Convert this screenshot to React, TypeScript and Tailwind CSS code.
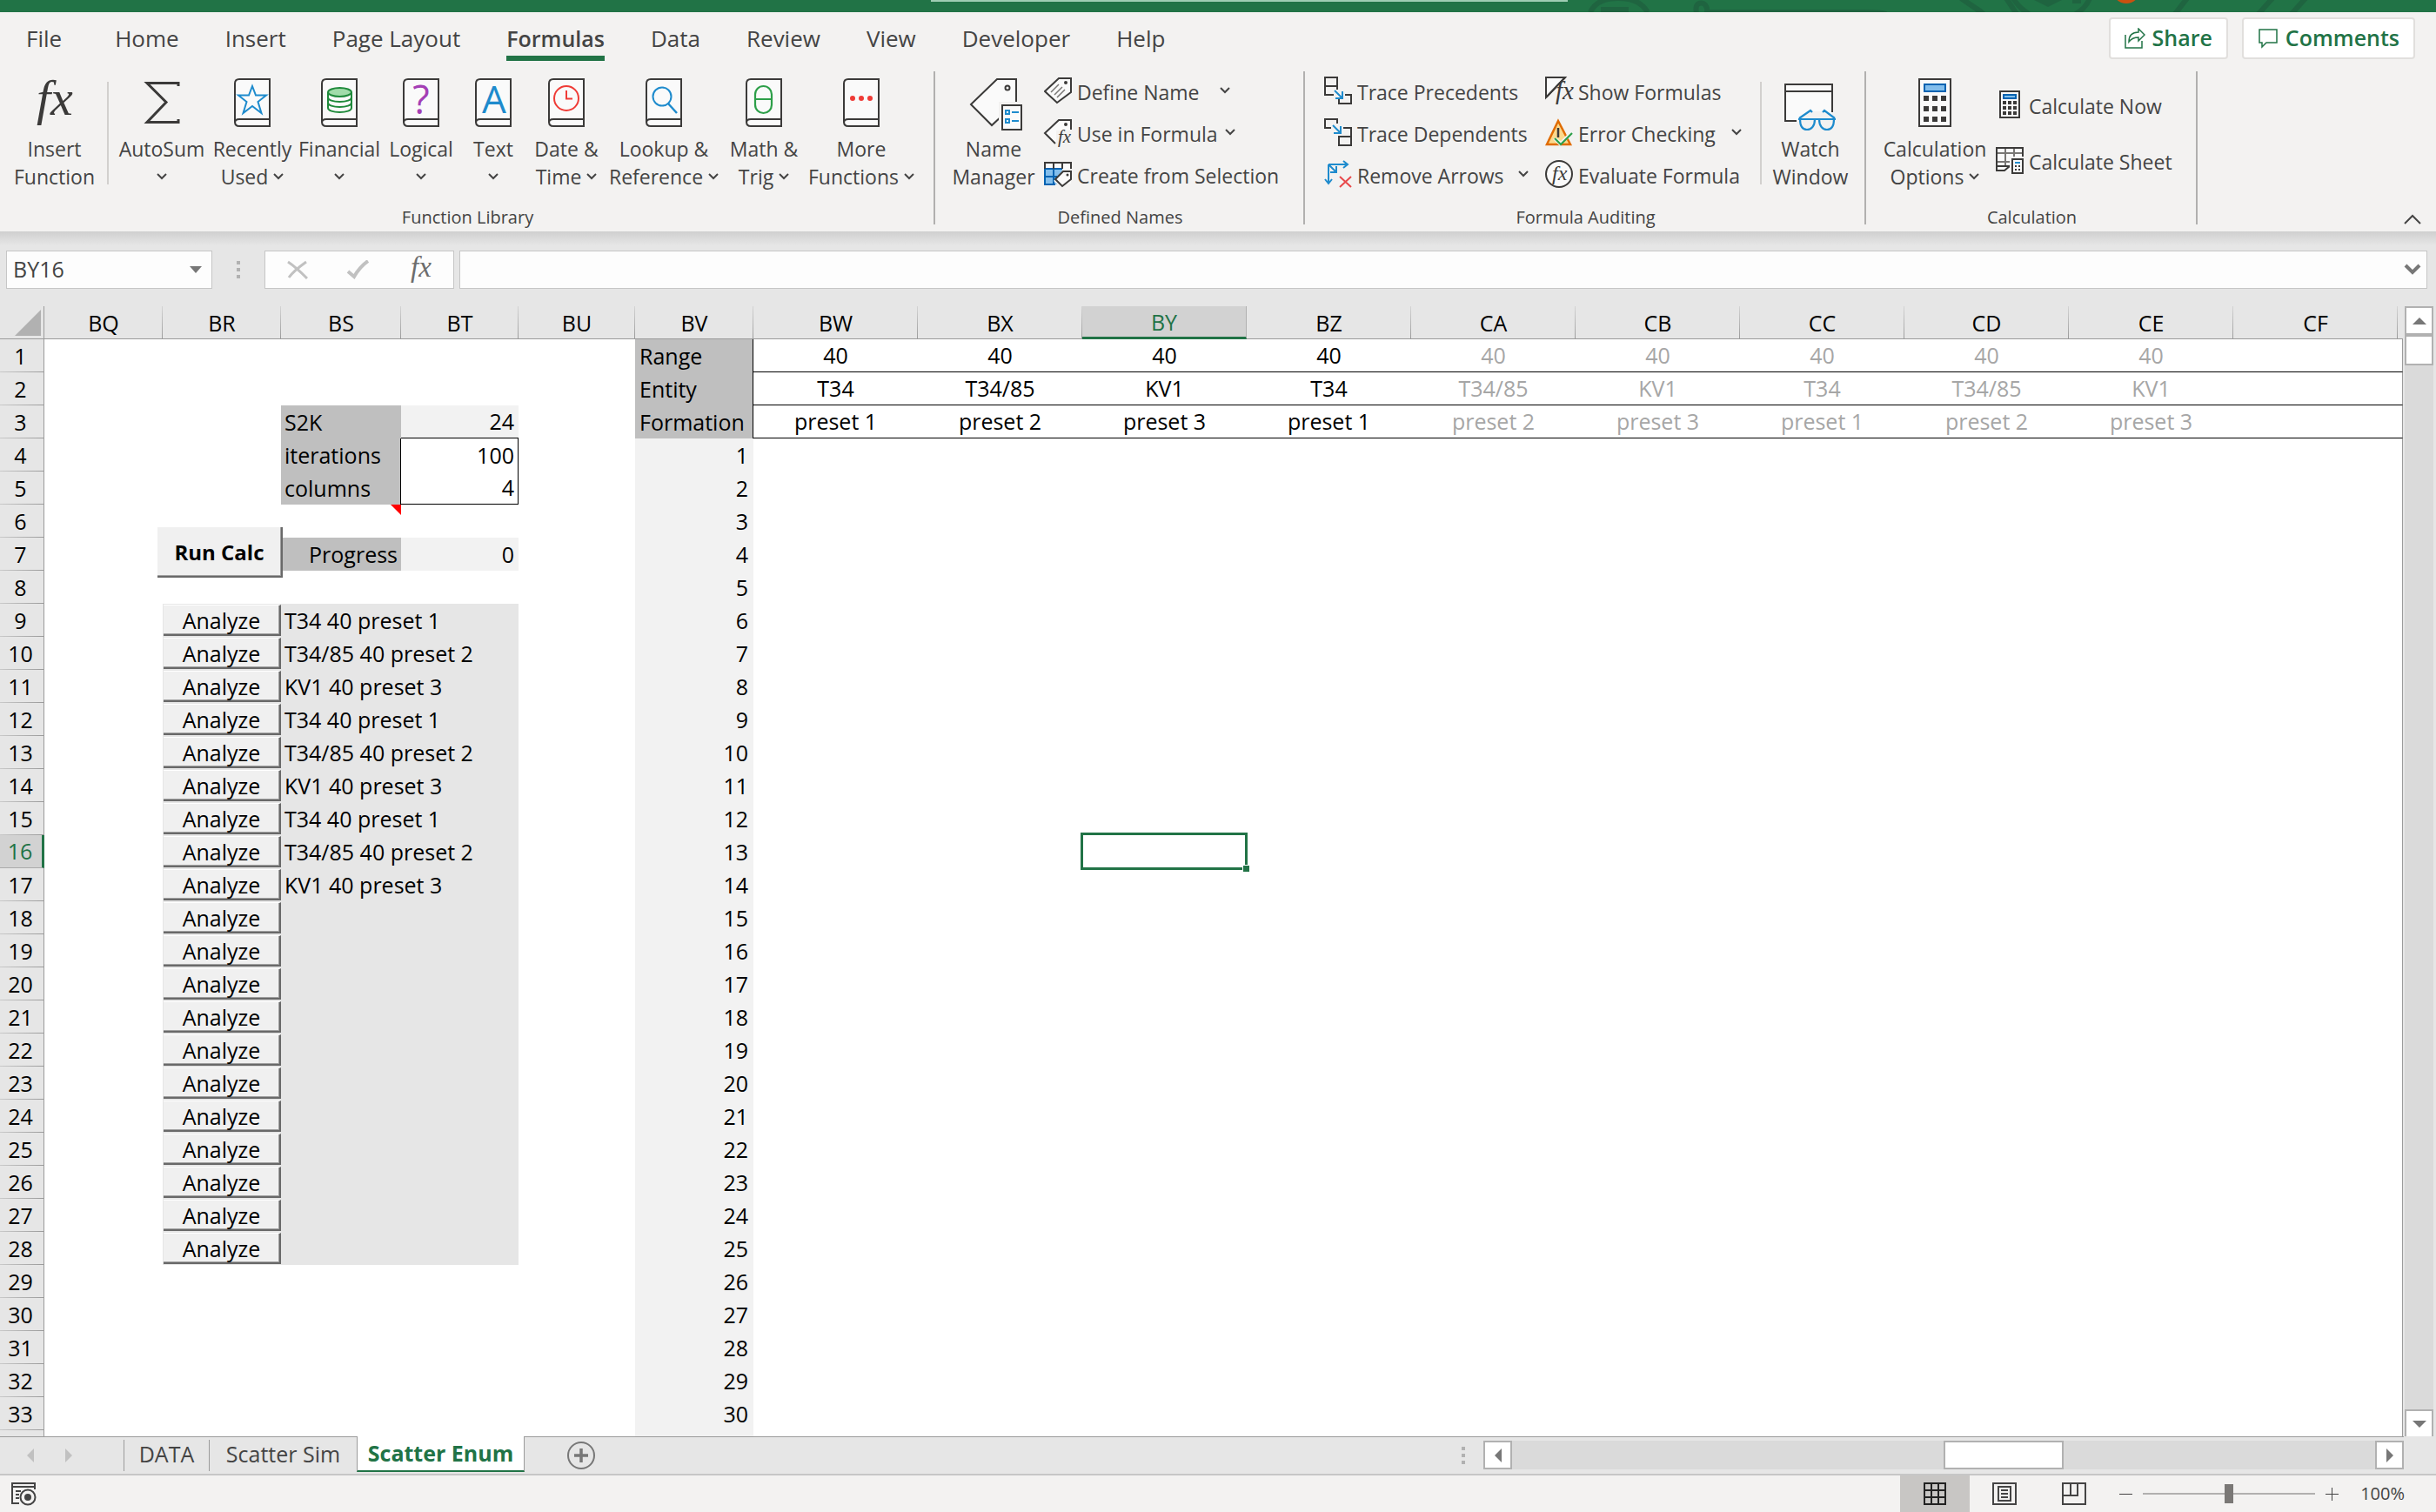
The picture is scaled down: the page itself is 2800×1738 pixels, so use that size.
import React from "react";

const INK = "#3b3a39";
const BLUE = "#1e8bcd";

/* ---------- small shared pieces ---------- */

function Chevron({ className = "" }: { className?: string }) {
  return (
    <svg width="12" height="8" viewBox="0 0 12 8" fill="none" className={`inline-block shrink-0 ${className}`}>
      <path d="M1 1l5 5 5-5" stroke="#444" strokeWidth="2" />
    </svg>
  );
}

function Book({ children }: { children: React.ReactNode }) {
  return (
    <svg width="42" height="56" viewBox="0 0 42 56" fill="none" className="overflow-visible">
      <path d="M41 1H6C3 1 1 3 1 6v44c0 3 2 5 5 5h35z" fill="#fafafa" stroke={INK} strokeWidth="2" />
      <path d="M41 47H6c-3 0-5 1.5-5 4" stroke={INK} strokeWidth="2" />
      {children}
    </svg>
  );
}

function FxText({ x, y, size, color = INK }: { x: number; y: number; size: number; color?: string }) {
  return (
    <text x={x} y={y} fontSize={size} fontFamily="Liberation Serif, serif" fontStyle="italic" fill={color}>
      fx
    </text>
  );
}

/* ---------- large ribbon icons ---------- */

const FxIcon = () => (
  <svg width="50" height="60" viewBox="0 0 50 60" className="overflow-visible">
    <FxText x={4} y={42} size={58} />
  </svg>
);

const SigmaIcon = () => (
  <svg width="42" height="56" viewBox="0 0 42 56" fill="none">
    <path d="M40 9V5.5H4L26 27.500 4 50.500H40V47" stroke={INK} strokeWidth="3" />
  </svg>
);

const StarIcon = () => (
  <Book>
    <path d="M21 9l4 10.500h12L27.500 27l4 13L21 32l-10.500 8 4-13L5 19.500h12z" stroke={BLUE} strokeWidth="2" />
  </Book>
);

const CoinsIcon = () => (
  <Book>
    <path d="M8 16v18c0 3 6 5 13.500 5S35 37 35 34V16" stroke="#1f8a3b" strokeWidth="2" />
    <path d="M8 22c0 3 6 5 13.500 5S35 25 35 22M8 28c0 3 6 5 13.500 5S35 31 35 28" stroke="#1f8a3b" strokeWidth="2" />
    <ellipse cx="21.500" cy="16" rx="13.500" ry="5" fill="#a1dcaa" stroke="#1f8a3b" strokeWidth="2" />
  </Book>
);

const QuestionIcon = () => (
  <Book>
    <text x="21" y="41" textAnchor="middle" fontSize="45" fontFamily="Open Sans, sans-serif" fill="#a43fb5">
      ?
    </text>
  </Book>
);

const LetterIcon = () => (
  <Book>
    <text x="22" y="40" textAnchor="middle" fontSize="44" fontFamily="Open Sans, sans-serif" fill={BLUE}>
      A
    </text>
  </Book>
);

const ClockIcon = () => (
  <Book>
    <circle cx="21" cy="23" r="14" stroke="#ef3b36" strokeWidth="2" />
    <path d="M21 14v9.500h7" stroke="#ef3b36" strokeWidth="2" />
  </Book>
);

const LookupIcon = () => (
  <Book>
    <circle cx="19" cy="21" r="10.500" stroke={BLUE} strokeWidth="2" />
    <path d="M26 29l10 11" stroke={BLUE} strokeWidth="2.500" />
  </Book>
);

const ThetaIcon = () => (
  <Book>
    <rect x="11" y="9" width="19" height="31" rx="9.500" stroke="#2d9f49" strokeWidth="2.200" />
    <path d="M11 24h19" stroke="#2d9f49" strokeWidth="2" />
  </Book>
);

const DotsIcon = () => (
  <Book>
    <circle cx="11" cy="23" r="3" fill="#ef3b36" />
    <circle cx="21" cy="23" r="3" fill="#ef3b36" />
    <circle cx="31" cy="23" r="3" fill="#ef3b36" />
  </Book>
);

const NameManagerIcon = () => (
  <svg width="66" height="62" viewBox="0 0 66 62" fill="none">
    <path d="M37 1h22v27L31 54 7 30z" fill="#fafafa" stroke={INK} strokeWidth="2" />
    <circle cx="49" cy="11" r="2.500" stroke={INK} strokeWidth="2" />
    <path d="M39 27h27v35H39z" fill="#f3f2f1" />
    <rect x="43" y="31" width="22" height="28" fill="#fafafa" stroke={INK} strokeWidth="2" />
    <path d="M47 37h4v4h-4zM47 47h4v4h-4zM54 39h8M54 49h8" stroke={BLUE} strokeWidth="2" />
  </svg>
);

const WatchIcon = () => (
  <svg width="62" height="62" viewBox="0 0 62 62" fill="none">
    <path d="M2 7h54v41H2z" fill="#fafafa" />
    <path d="M15 49H2V7h54v32M2 15h54" stroke={INK} strokeWidth="2" />
    <path d="M18 47l12-9h18l11 9-4 14H20z" fill="#f3f2f1" />
    <path
      d="M17 47h43M18 46l13-9 2 2M59 46l-12-9-2 2M19 47c0 8 3 12 8 12s9-4 9-12M41 47c0 8 4 12 9 12s8-4 8-12"
      stroke={BLUE}
      strokeWidth="2.200"
    />
  </svg>
);

const CalculatorIcon = () => (
  <svg width="38" height="56" viewBox="0 0 38 56" fill="none">
    <rect x="1" y="1" width="36" height="54" fill="#fafafa" stroke={INK} strokeWidth="2" />
    <rect x="7" y="7" width="24" height="8" fill="#83beec" stroke="#0063b1" strokeWidth="2" />
    {[20, 32, 44].map((y) => (
      <path key={y} d={`M6 ${y}h6v6H6zM16 ${y}h6v6h-6zM26 ${y}h6v6h-6z`} fill={INK} />
    ))}
  </svg>
);

/* ---------- small ribbon icons ---------- */

const tagPath = "M17 2h14v16L15 30 1 17z";

const DefineIcon = () => (
  <svg width="32" height="32" viewBox="0 0 32 32" fill="none">
    <path d={tagPath} fill="#fafafa" stroke={INK} strokeWidth="2" />
    <circle cx="25" cy="7" r="2" fill={INK} />
    <path d="M8 18l9-9M12 21l9-9M15 24l9-9" stroke="#797775" strokeWidth="1.500" />
  </svg>
);

const UseIcon = () => (
  <svg width="32" height="32" viewBox="0 0 32 32" fill="none" className="overflow-visible">
    <path d={tagPath} fill="#fafafa" />
    <path d="M31 13V2H17L1 17l12 12" stroke={INK} strokeWidth="2" />
    <circle cx="25" cy="7" r="2" fill={INK} />
    <path d="M14 14h18v18H14z" fill="#f3f2f1" />
    <FxText x={16} y={28} size={21} />
  </svg>
);

const CreateIcon = () => (
  <svg width="32" height="32" viewBox="0 0 32 32" fill="none">
    <path d="M1 3h30v24H1z" fill="#fafafa" />
    <path d="M1 10h20v18H1z" fill="#83beec" />
    <path d="M1 10h20M1 19h14M11 10v18M1 10v18h12" stroke="#0063b1" strokeWidth="2" />
    <path d="M1 10V3h30v8M11 3v7M21 3v7" stroke={INK} strokeWidth="2" />
    <path d="M23 10h9v12L20 32l-9-8z" fill="#f3f2f1" />
    <path d="M22 13h9v9l-10 8-8-8z" fill="#fafafa" stroke={INK} strokeWidth="2" />
    <circle cx="27" cy="17" r="1.500" fill={INK} />
  </svg>
);

const PrecedentsIcon = () => (
  <svg width="32" height="32" viewBox="0 0 32 32" fill="none">
    <path d="M11 21H1V1h14v14M1 11h14M17 25v6h14V21h-7" stroke={INK} strokeWidth="2" />
    <path d="M12 16l9 9M21 17v8h-8" stroke={BLUE} strokeWidth="2" />
  </svg>
);

const DependentsIcon = () => (
  <svg width="32" height="32" viewBox="0 0 32 32" fill="none">
    <path d="M8 11H1V1h14v5M22 11h9v20H17V21h14" stroke={INK} strokeWidth="2" />
    <path d="M10 8l9 9M19 9v8h-8" stroke={BLUE} strokeWidth="2" />
  </svg>
);

const RemoveIcon = () => (
  <svg width="32" height="32" viewBox="0 0 32 32" fill="none">
    <path d="M5 5h22M22 1l5 4-5 4M5 5v22M1 22l4 5 4-5M5 5l9 9M14 7v7H7" stroke={BLUE} strokeWidth="2" />
    <path d="M18 19l13 12M31 19L18 31" stroke="#e8484a" strokeWidth="2" />
  </svg>
);

const ShowIcon = () => (
  <svg width="32" height="32" viewBox="0 0 32 32" fill="none" className="overflow-visible">
    <path d="M1 24V1h22z" fill="#fafafa" stroke={INK} strokeWidth="2" />
    <path d="M13 12l8-8h11v28H11z" fill="#f3f2f1" />
    <path d="M1 24L23 1" stroke={INK} strokeWidth="2" />
    <FxText x={12} y={26} size={29} />
  </svg>
);

const ErrorIcon = () => (
  <svg width="32" height="32" viewBox="0 0 32 32" fill="none">
    <path d="M15 3l14 27H2z" fill="#fbd98d" stroke="#e06c00" strokeWidth="2.500" />
    <path d="M15 11v11" stroke={INK} strokeWidth="2.500" />
    <path d="M9 24l8 8 15-14v-4l-4 2-10 10-6-4z" fill="#f3f2f1" />
    <path d="M11 23l7 7 13-13" stroke="#2d9f49" strokeWidth="2.200" />
  </svg>
);

const EvaluateIcon = () => (
  <svg width="32" height="32" viewBox="0 0 32 32" fill="none">
    <circle cx="16" cy="16" r="15" fill="#fafafa" stroke={INK} strokeWidth="2" />
    <FxText x={8} y={23} size={24} />
  </svg>
);

const CalcNowIcon = () => (
  <svg width="32" height="32" viewBox="0 0 32 32" fill="none">
    <rect x="5" y="1" width="22" height="30" fill="#fafafa" stroke={INK} strokeWidth="2" />
    <rect x="9" y="5" width="14" height="4" fill="#83beec" stroke="#0063b1" strokeWidth="2" />
    {[12, 18, 24].map((y) => (
      <path key={y} d={`M8 ${y}h4v4H8zM14 ${y}h4v4h-4zM20 ${y}h4v4h-4z`} fill={INK} />
    ))}
  </svg>
);

const CalcSheetIcon = () => (
  <svg width="32" height="32" viewBox="0 0 32 32" fill="none">
    <path d="M1 2h30v26H1z" fill="#fafafa" />
    <path d="M1 8h30M1 18h16M11 2v22M21 2v12" stroke="#797775" strokeWidth="2" />
    <path d="M31 12V2H1v26h9l6-5H1" stroke={INK} strokeWidth="2" />
    <path d="M16 12h16v20H16z" fill="#f3f2f1" />
    <rect x="19" y="15" width="12" height="16" fill="#fafafa" stroke={INK} strokeWidth="2" />
    <path d="M22 19h6" stroke={BLUE} strokeWidth="2" />
    <path d="M22 22h2v2h-2zM26 22h2v2h-2zM22 26h2v2h-2zM26 26h2v2h-2z" fill={INK} />
  </svg>
);

/* ---------- ribbon ---------- */

function BigButton({
  icon,
  first,
  second,
  menu,
  className,
}: {
  icon: React.ReactNode;
  first: string;
  second?: string;
  menu?: boolean;
  className: string;
}) {
  return (
    <button type="button" className={`flex shrink-0 flex-col items-center pt-[14px] ${className}`}>
      <span className="flex h-[65px] items-start justify-center">{icon}</span>
      <span className="whitespace-nowrap leading-8">{first}</span>
      <span className="flex h-8 items-center justify-center gap-[6px] whitespace-nowrap leading-8">
        {second}
        {menu && <Chevron />}
      </span>
    </button>
  );
}

function SmallButton({ icon, label, menu }: { icon: React.ReactNode; label: string; menu?: string }) {
  return (
    <button type="button" className="flex h-12 items-center whitespace-nowrap">
      {icon}
      <span className="ml-[6px] pt-1">{label}</span>
      {menu && <Chevron className={menu} />}
    </button>
  );
}

function Group({ title, className, children }: { title: string; className: string; children: React.ReactNode }) {
  return (
    <section className={`relative flex shrink-0 flex-col ${className}`}>
      <div className="flex h-[159px]">{children}</div>
      <h2 className="text-center text-[20px] leading-[30px]">{title}</h2>
      <span className="absolute right-0 top-[6px] h-[176px] w-[2px] bg-[#b1b0af]" />
    </section>
  );
}

const Divider = () => <span className="mt-[18px] h-[118px] w-[2px] shrink-0 bg-[#d2d0ce]" />;

const TABS = ["File", "Home", "Insert", "Page Layout", "Formulas", "Data", "Review", "View", "Developer", "Help"];

function TitleBar() {
  return (
    <div className="flex h-[14px] shrink-0 justify-end overflow-hidden bg-[#217346]">
      <svg width="1730" height="14" viewBox="0 0 1730 14" fill="none">
        <path d="M0 0h732v2H0z" fill="#9fcdb3" />
        <g stroke="#1f6440" strokeWidth="6">
          <path d="M758 14c4-9 12-16 32-16s28 7 34 16" />
          <path d="M880 14c-4-14 14-14 12 0h180c12 0 20 0 26 2" />
          <path d="M1184-2l26 18M1236-2l12 18M1184-2l24 16" />
          <path d="M1244-2c6 10 12 14 18 18M1332-2c-4 10-10 14-16 18" />
          <path d="M1430 16l14-18M1526 16l16-18M1564 16l16-18" />
        </g>
        <path d="M770 8h32v6h-32zM1268 0h32l-16 8zM1312 0h10v4h-10z" fill="#1f6440" />
        <circle cx="1374" cy="-12" r="16" fill="#ca5010" />
      </svg>
    </div>
  );
}

function TabBar() {
  return (
    <div className="flex h-[62px] shrink-0 items-start justify-between bg-[#f3f2f1] pl-[30px] pr-6 text-[#444]">
      <nav className="flex gap-[53px] text-[26px]">
        {TABS.map((tab) => (
          <button
            key={tab}
            type="button"
            className={
              tab === "Formulas"
                ? "h-14 whitespace-nowrap border-b-[6px] border-[#217346] pt-[11px] text-[25px] font-semibold"
                : "h-14 whitespace-nowrap border-b-[6px] border-transparent pt-[11px] first:mr-2"
            }
          >
            {tab}
          </button>
        ))}
      </nav>
      <div className="flex gap-4 pt-[6px] text-[25px] font-semibold text-[#217346]">
        <button type="button" className="flex h-12 items-center gap-2 rounded border-2 border-[#e1dfdd] bg-white px-4">
          <svg width="24" height="24" viewBox="0 0 24 24" fill="none" stroke="#217346" strokeWidth="1.500">
            <path d="M1 8v15h19v-8" />
            <path d="M16 1l7 7-7 7v-4c-5 0-8 1-11 5 0-7 4-11 11-11z" />
          </svg>
          Share
        </button>
        <button type="button" className="flex h-12 items-center gap-2 rounded border-2 border-[#e1dfdd] bg-white px-4">
          <svg width="24" height="24" viewBox="0 0 24 24" fill="none" stroke="#217346" strokeWidth="1.500">
            <path d="M2 2h20v15H10l-5 5v-5H2z" />
          </svg>
          Comments
        </button>
      </div>
    </div>
  );
}

function Ribbon() {
  return (
    <div className="flex h-[190px] shrink-0 bg-[#f3f2f1] text-[23px] text-[#444]">
      <Group title="Function Library" className="w-[1075px]">
        <BigButton className="w-[123px] pl-[2px]" icon={<FxIcon />} first="Insert" second="Function" />
        <Divider />
        <BigButton className="ml-[9px] w-[104px]" icon={<SigmaIcon />} first="AutoSum" menu />
        <BigButton className="w-[104px]" icon={<StarIcon />} first="Recently" second="Used" menu />
        <BigButton className="w-[96px]" icon={<CoinsIcon />} first="Financial" menu />
        <BigButton className="w-[92px]" icon={<QuestionIcon />} first="Logical" menu />
        <BigButton className="w-[74px]" icon={<LetterIcon />} first="Text" menu />
        <BigButton className="w-[94px]" icon={<ClockIcon />} first="Date &amp;" second="Time" menu />
        <BigButton className="w-[130px]" icon={<LookupIcon />} first="Lookup &amp;" second="Reference" menu />
        <BigButton className="w-[100px]" icon={<ThetaIcon />} first="Math &amp;" second="Trig" menu />
        <BigButton className="w-[124px]" icon={<DotsIcon />} first="More" second="Functions" menu />
      </Group>
      <Group title="Defined Names" className="w-[425px]">
        <BigButton className="ml-[9px] w-[116px]" icon={<NameManagerIcon />} first="Name" second="Manager" />
        <div className="flex flex-col pt-1">
          <SmallButton icon={<DefineIcon />} label="Define Name" menu="ml-6" />
          <SmallButton icon={<UseIcon />} label="Use in Formula" menu="ml-2" />
          <SmallButton icon={<CreateIcon />} label="Create from Selection" />
        </div>
      </Group>
      <Group title="Formula Auditing" className="w-[645px]">
        <div className="ml-[22px] flex w-[254px] flex-col pt-1">
          <SmallButton icon={<PrecedentsIcon />} label="Trace Precedents" />
          <SmallButton icon={<DependentsIcon />} label="Trace Dependents" />
          <SmallButton icon={<RemoveIcon />} label="Remove Arrows" menu="ml-4" />
        </div>
        <div className="flex w-[247px] flex-col pt-1">
          <SmallButton icon={<ShowIcon />} label="Show Formulas" />
          <SmallButton icon={<ErrorIcon />} label="Error Checking" menu="ml-[18px]" />
          <SmallButton icon={<EvaluateIcon />} label="Evaluate Formula" />
        </div>
        <Divider />
        <BigButton className="w-[112px]" icon={<WatchIcon />} first="Watch" second="Window" />
      </Group>
      <Group title="Calculation" className="w-[381px]">
        <BigButton className="ml-4 w-[126px]" icon={<CalculatorIcon />} first="Calculation" second="Options" menu />
        <div className="ml-[7px] flex flex-col gap-4 pt-5">
          <SmallButton icon={<CalcNowIcon />} label="Calculate Now" />
          <SmallButton icon={<CalcSheetIcon />} label="Calculate Sheet" />
        </div>
      </Group>
      <div className="flex flex-1 items-end justify-end pb-2 pr-4">
        <button type="button" aria-label="Collapse the ribbon">
          <svg width="22" height="12" viewBox="0 0 22 12" fill="none">
            <path d="M2 11l9-9 9 9" stroke="#444" strokeWidth="2" />
          </svg>
        </button>
      </div>
    </div>
  );
}

/* ---------- formula bar ---------- */

function VDots() {
  return (
    <span className="flex flex-col gap-1">
      <span className="size-1 bg-[#b1b1b1]" />
      <span className="size-1 bg-[#b1b1b1]" />
      <span className="size-1 bg-[#b1b1b1]" />
    </span>
  );
}

function FormulaBar() {
  return (
    <div className="flex h-[86px] shrink-0 bg-[#e6e6e6] bg-[linear-gradient(#cfcfcf,#e6e6e6)] bg-[length:100%_16px] bg-no-repeat pb-5 pl-[7px] pr-[10px] pt-[22px] text-[25px] text-[#444]">
      <div className="flex w-[237px] shrink-0 items-center border border-[#c6c6c6] bg-[#fdfdfd]">
        <input aria-label="Name Box" defaultValue="BY16" className="w-full min-w-0 flex-1 bg-transparent pl-[7px] outline-none" />
        <button type="button" aria-label="Name Box list" className="pr-[11px]">
          <svg width="14" height="8" viewBox="0 0 14 8">
            <path d="M0 0h14L7 8z" fill="#777" />
          </svg>
        </button>
      </div>
      <div className="flex w-[60px] shrink-0 items-center justify-center">
        <VDots />
      </div>
      <div className="flex w-[218px] shrink-0 items-center justify-around border border-[#c6c6c6] bg-[#fdfdfd] pl-[3px]">
        <button type="button" aria-label="Cancel">
          <svg width="24" height="22" viewBox="0 0 24 22" fill="none">
            <path d="M1 2c6 4 14 11 22 19M22 2C15 7 7 13 2 20" stroke="#c1c1c1" strokeWidth="3" />
          </svg>
        </button>
        <button type="button" aria-label="Enter">
          <svg width="26" height="22" viewBox="0 0 26 22" fill="none">
            <path d="M2 13l7 6C13 12 18 6 25 1" stroke="#c1c1c1" strokeWidth="4" />
          </svg>
        </button>
        <button type="button" aria-label="Insert function">
          <svg width="30" height="36" viewBox="0 0 30 36" className="overflow-visible">
            <FxText x={3} y={26} size={33} color="#6d6d6d" />
          </svg>
        </button>
      </div>
      <div className="ml-[6px] flex flex-1 items-center border border-[#c6c6c6] bg-[#fdfdfd]">
        <input aria-label="Formula" className="h-full min-w-0 flex-1 bg-transparent px-2 outline-none" />
        <button type="button" aria-label="Expand formula bar" className="pr-[6px]">
          <svg width="20" height="14" viewBox="0 0 20 14" fill="none">
            <path d="M2 2l8 8 8-8" stroke="#777" strokeWidth="4" />
          </svg>
        </button>
      </div>
    </div>
  );
}

/* ---------- worksheet ---------- */

const PRESETS = [
  ["T34", "preset 1"],
  ["T34/85", "preset 2"],
  ["KV1", "preset 3"],
];
const WIDE = ["BW", "BX", "BY", "BZ", "CA", "CB", "CC", "CD", "CE"];
const COLUMNS = ["BQ", "BR", "BS", "BT", "BU", "BV", ...WIDE, "CF", ""];
const SETTINGS: Record<number, [string, string]> = { 3: ["S2K", "24"], 4: ["iterations", "100"], 5: ["columns", "4"] };
const HEAD_LABELS = ["Range", "Entity", "Formation"];
const LAST_ROW = 33;

function RunCalc() {
  return (
    <button
      type="button"
      className="absolute -bottom-2 -left-[6px] -right-[2px] -top-3 z-10 border-b-2 border-r-2 border-[#696969] bg-[#f0f0f0] text-[24px] font-bold shadow-[inset_-1px_-1px_0_#a0a0a0]"
    >
      Run Calc
    </button>
  );
}

function Analyze() {
  return (
    <button
      type="button"
      className="ml-px block h-9 w-[135px] border-b-2 border-r-2 border-t border-b-[#696969] border-r-[#696969] border-t-white bg-[#f0f0f0] text-center leading-8 shadow-[inset_-1px_-1px_0_#a0a0a0]"
    >
      Analyze
    </button>
  );
}

function SheetRow({ row }: { row: number }) {
  const list = row >= 9 && row <= 28;
  const preset = PRESETS[(row - 9) % 3];
  const setting = SETTINGS[row];
  const current = row === 16;
  const ruled = row <= 3;
  const labelled = row <= LAST_ROW;

  const bs = setting
    ? "relative bg-[#bfbfbf] pl-1"
    : row === 7
      ? "relative bg-[#bfbfbf] pr-1 text-right"
      : list
        ? "relative bg-[#e6e6e6] pl-1"
        : "relative";
  const bt =
    row === 3
      ? "border-b border-black bg-[#f2f2f2] pr-[5px] text-right"
      : row === 4
        ? "relative border-r border-black pr-1 text-right shadow-[-1px_0_0_#000]"
        : row === 5
          ? "relative border-b border-r border-black pr-1 text-right shadow-[-1px_0_0_#000]"
          : row === 7
            ? "bg-[#f2f2f2] pr-[5px] text-right"
            : list
              ? "bg-[#e6e6e6]"
              : "";

  return (
    <tr className="h-[38px]">
      <th
        scope="row"
        className={
          current
            ? "h-[38px] border-b border-r-[3px] border-b-[#ababab] border-r-[#217346] bg-[#d2d2d2] pr-[2px] font-normal text-[#217346]"
            : "h-[38px] border-r border-[#9b9b9b] bg-[#e6e6e6] bg-[linear-gradient(90deg,#c9c9c9,#9b9b9b)] bg-[length:100%_1px] bg-bottom bg-no-repeat pr-[3px] font-normal"
        }
      >
        {labelled && row}
      </th>
      <td />
      <td className={list ? "bg-[#e6e6e6]" : "relative"}>
        {list && <Analyze />}
        {row === 7 && <RunCalc />}
      </td>
      <td className={bs}>
        {setting?.[0]}
        {row === 7 && "Progress"}
        {row >= 9 && row <= 17 && `${preset[0]} 40 ${preset[1]}`}
        {row === 6 && (
          <svg width="12" height="12" viewBox="0 0 12 12" className="absolute right-0 top-0">
            <path d="M0 0h12v12z" fill="#f00" />
          </svg>
        )}
      </td>
      <td className={bt}>
        {setting?.[1]}
        {row === 7 && "0"}
      </td>
      <td />
      <td className={ruled ? "border-r border-black bg-[#bfbfbf] pl-[5px]" : "bg-[#f2f2f2] pr-[6px] text-right"}>
        {ruled ? HEAD_LABELS[row - 1] : labelled && row - 3}
      </td>
      {WIDE.map((name, i) => {
        const text = ["40", PRESETS[i % 3][0], PRESETS[i % 3][1]][row - 1];
        if (current && name === "BY") {
          return (
            <td key={name} className="relative">
              <span className="absolute -bottom-[2px] -left-[2px] -right-px -top-[3px] border-[3px] border-[#217346]" />
              <span className="absolute -bottom-1 -right-[3px] size-2 border-l border-t border-white bg-[#217346]" />
            </td>
          );
        }
        return (
          <td
            key={name}
            className={
              !ruled
                ? ""
                : i < 4
                  ? "border-b border-black text-center"
                  : "border-b border-black text-center text-[#a6a6a6]"
            }
          >
            {text}
          </td>
        );
      })}
      <td className={ruled ? "border-b border-black" : ""} />
      <td className={ruled ? "border-b border-r border-b-black border-r-[#9b9b9b]" : "border-r border-[#9b9b9b]"} />
    </tr>
  );
}

function Sheet() {
  return (
    <table className="w-full table-fixed border-separate border-spacing-0 whitespace-nowrap bg-white text-[25px] leading-[37px] text-black">
      <colgroup>
        <col className="w-[51px]" />
        <col className="w-[136px]" />
        <col className="w-[136px]" />
        <col className="w-[138px]" />
        <col className="w-[135px]" />
        <col className="w-[134px]" />
        <col className="w-[136px]" />
        {WIDE.map((name) => (
          <col key={name} className="w-[189px]" />
        ))}
        <col className="w-[189px]" />
        <col />
      </colgroup>
      <thead>
        <tr className="h-[38px]">
          <th className="h-[38px] border-b border-r border-[#9b9b9b] bg-[#e6e6e6]">
            <svg width="30" height="30" viewBox="0 0 30 30" className="ml-auto mr-[3px]">
              <path d="M30 0v30H0z" fill="#b1b1b1" />
            </svg>
          </th>
          {COLUMNS.map((name, i) => (
            <th
              key={i}
              scope="col"
              className={
                name === "BY"
                  ? "border-b-[3px] border-r border-b-[#217346] border-r-[#b1b1b1] bg-[#d2d2d2] pt-[2px] font-normal leading-[33px] text-[#217346]"
                  : name === ""
                    ? "border-b border-[#9b9b9b] bg-[#e6e6e6]"
                    : "border-b border-[#9b9b9b] bg-[#e6e6e6] bg-[linear-gradient(#d4d4d4,#9b9b9b)] bg-[length:1px_100%] bg-right bg-no-repeat pt-[2px] font-normal leading-[35px]"
              }
            >
              {name}
            </th>
          ))}
        </tr>
      </thead>
      <tbody>
        {Array.from({ length: LAST_ROW + 1 }, (_, i) => (
          <SheetRow key={i} row={i + 1} />
        ))}
      </tbody>
    </table>
  );
}

const arrowBox = "flex size-[33px] shrink-0 items-center justify-center border-2 border-[#b1b1b1] bg-white";

function VerticalScroll() {
  return (
    <div className="mb-[-2px] ml-[2px] mr-[3px] flex w-[33px] shrink-0 flex-col bg-[#dadada]">
      <button type="button" aria-label="Scroll up" className={arrowBox}>
        <svg width="16" height="8" viewBox="0 0 16 8">
          <path d="M0 8h16L8 0z" fill="#777" />
        </svg>
      </button>
      <div className="h-[35px] w-[33px] border-2 border-[#b1b1b1] bg-white" />
      <div className="flex-1" />
      <button type="button" aria-label="Scroll down" className={arrowBox}>
        <svg width="16" height="8" viewBox="0 0 16 8">
          <path d="M0 0h16L8 8z" fill="#777" />
        </svg>
      </button>
    </div>
  );
}

/* ---------- sheet tabs and status bar ---------- */

function SheetTabs() {
  return (
    <div className="flex h-[45px] shrink-0 border-b-2 border-[#c6c6c6] bg-[#e6e6e6] pr-[37px] text-[25px] text-[#444]">
      <div className="flex flex-1 border-t border-[#9b9b9b]">
        <div className="flex w-[142px] items-center gap-9 pl-[31px]">
          <button type="button" aria-label="Previous sheet">
            <svg width="8" height="16" viewBox="0 0 8 16">
              <path d="M8 0v16L0 8z" fill="#c1c1c1" />
            </svg>
          </button>
          <button type="button" aria-label="Next sheet">
            <svg width="8" height="16" viewBox="0 0 8 16">
              <path d="M0 0v16l8-8z" fill="#c1c1c1" />
            </svg>
          </button>
        </div>
        <button type="button" className="my-[3px] w-[98px] border-l border-[#9b9b9b] pb-1 leading-[30px]">
          DATA
        </button>
        <button type="button" className="my-[3px] w-[170px] border-l border-[#9b9b9b] pb-1 leading-[30px]">
          Scatter Sim
        </button>
        <button
          type="button"
          className="-mt-px mb-[2px] w-[193px] border-x border-b-2 border-x-[#9b9b9b] border-b-[#217346] bg-white pb-[2px] font-bold leading-[36px] text-[#217346]"
        >
          Scatter Enum
        </button>
        <button type="button" aria-label="New sheet" className="ml-12">
          <svg width="34" height="34" viewBox="0 0 34 34" fill="none">
            <circle cx="17" cy="17" r="15" stroke="#777" strokeWidth="2" />
            <path d="M17 9v16M9 17h16" stroke="#777" strokeWidth="3.500" />
          </svg>
        </button>
        <div className="flex flex-1 items-center justify-end pr-[21px]">
          <VDots />
        </div>
      </div>
      <div className="flex w-[1058px] shrink-0 border-t border-[#9b9b9b] pb-[5px] pt-1">
        <div className="flex flex-1 bg-[#dadada]">
          <button type="button" aria-label="Scroll left" className={arrowBox}>
            <svg width="8" height="16" viewBox="0 0 8 16">
              <path d="M8 0v16L0 8z" fill="#777" />
            </svg>
          </button>
          <div className="w-1/2 max-w-[496px]" />
          <div className="h-[33px] w-[138px] border-2 border-[#b1b1b1] bg-white" />
          <div className="flex-1" />
          <button type="button" aria-label="Scroll right" className={arrowBox}>
            <svg width="8" height="16" viewBox="0 0 8 16">
              <path d="M0 0v16l8-8z" fill="#777" />
            </svg>
          </button>
        </div>
      </div>
    </div>
  );
}

function StatusBar() {
  return (
    <div className="flex h-[42px] shrink-0 items-center justify-between bg-[#f3f2f1] pl-[13px] pr-9 text-[20px] text-[#444]">
      <button type="button" aria-label="Record macro">
        <svg width="30" height="28" viewBox="0 0 30 28" fill="none" stroke="#444" strokeWidth="2">
          <path d="M9 25H1V2h26v7M1 6h26M5 11h6M5 15h4M5 19h4" />
          <circle cx="19" cy="18" r="8.500" />
          <circle cx="19" cy="18" r="4" fill="#444" stroke="none" />
        </svg>
      </button>
      <div className="flex h-full items-center">
        <button type="button" aria-label="Normal view" className="flex h-full w-20 items-center justify-center bg-[#c8c6c4]">
          <svg width="26" height="26" viewBox="0 0 26 26" fill="none">
            <path d="M1 1h24v24H1zM1 9h24M1 17h24M9 1v24M17 1v24" stroke="#222" strokeWidth="2" />
          </svg>
        </button>
        <button type="button" aria-label="Page layout view" className="flex h-full w-20 items-center justify-center">
          <svg width="28" height="26" viewBox="0 0 28 26" fill="none">
            <path d="M1 1h26v24H1zM7 5h14v16H7zM10 9h8M10 13h8M10 17h8" stroke="#444" strokeWidth="2" />
          </svg>
        </button>
        <button type="button" aria-label="Page break view" className="flex h-full w-20 items-center justify-center">
          <svg width="28" height="26" viewBox="0 0 28 26" fill="none">
            <path d="M1 1h26v24H1zM1 15h17V1M10 1v14" stroke="#444" strokeWidth="2" />
          </svg>
        </button>
        <button type="button" aria-label="Zoom out" className="ml-3">
          <svg width="15" height="15" viewBox="0 0 15 15">
            <path d="M0 7h15v1H0z" fill="#444" />
          </svg>
        </button>
        <input
          type="range"
          aria-label="Zoom"
          defaultValue={50}
          className="mx-3 h-6 w-[198px] appearance-none bg-transparent [&::-webkit-slider-runnable-track]:h-[2px] [&::-webkit-slider-runnable-track]:bg-[#b1b0af] [&::-webkit-slider-thumb]:-mt-[10px] [&::-webkit-slider-thumb]:h-[22px] [&::-webkit-slider-thumb]:w-[10px] [&::-webkit-slider-thumb]:appearance-none [&::-webkit-slider-thumb]:bg-[#7a7876]"
        />
        <button type="button" aria-label="Zoom in">
          <svg width="15" height="15" viewBox="0 0 15 15">
            <path d="M0 7h15v1H0zM7 0h1v15H7z" fill="#444" />
          </svg>
        </button>
        <button type="button" className="ml-[25px]">
          100%
        </button>
      </div>
    </div>
  );
}

export default function App() {
  return (
    <div className="flex h-screen flex-col overflow-hidden bg-[#e6e6e6] font-['Open_Sans','Noto_Sans',sans-serif]">
      <TitleBar />
      <TabBar />
      <Ribbon />
      <FormulaBar />
      <main className="flex min-h-0 flex-1">
        <div className="min-w-0 flex-1 overflow-hidden">
          <Sheet />
        </div>
        <VerticalScroll />
      </main>
      <SheetTabs />
      <StatusBar />
    </div>
  );
}
